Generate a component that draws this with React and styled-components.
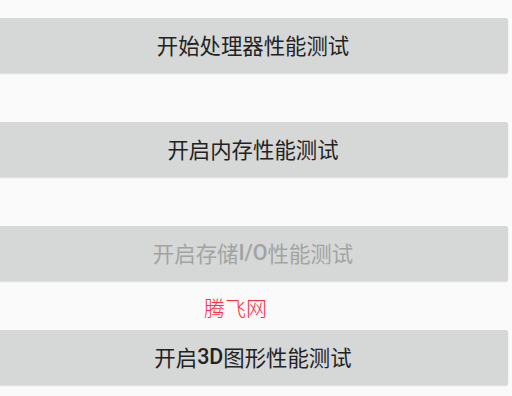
import React from "react";
import styled, { createGlobalStyle } from "styled-components";

const GlobalStyle = createGlobalStyle`
  html, body {
    margin: 0;
    padding: 0;
    background: #fafafa;
  }
  body {
    font-family: Roboto, "Noto Sans CJK SC", sans-serif;
  }
`;

const Screen = styled.div`
  width: 512px;
  height: 396px;
  overflow: hidden;
  background: #fafafa;
  padding-top: 18px;
  box-sizing: border-box;
`;

const Column = styled.div`
  display: flex;
  flex-direction: column;
  margin-left: -4px;
  width: 512px;
`;

const TestButton = styled.button`
  display: flex;
  align-items: center;
  justify-content: center;
  height: 55px;
  width: 100%;
  margin: 0;
  padding: 0 0 3px 2px;
  border: none;
  border-radius: 2px;
  background: #d6d7d7;
  box-shadow: 0 1px 1.5px rgba(0, 0, 0, 0.12);
  font-family: Roboto, "Noto Sans CJK SC", sans-serif;
  font-size: 21.4px;
  font-weight: 400;
  color: ${(p) => (p.disabled ? "#a2a3a3" : "#222222")};
  cursor: ${(p) => (p.disabled ? "default" : "pointer")};
`;

const Latin = styled.span`
  font-weight: 500;
`;

const Spacer = styled.div`
  height: 49px;
  flex-shrink: 0;
`;

const Note = styled.div`
  height: 49px;
  display: flex;
  align-items: center;
  padding-left: 208px;
  padding-top: 3px;
  box-sizing: border-box;
  font-family: "Noto Sans CJK SC", sans-serif;
  font-size: 21px;
  font-weight: 300;
  color: #ff2e3a;
`;

const App = () => {
  return (
    <>
      <GlobalStyle />
      <Screen>
        <Column>
          <TestButton>开始处理器性能测试</TestButton>
          <Spacer />
          <TestButton>开启内存性能测试</TestButton>
          <Spacer />
          <TestButton disabled>
            开启存储<Latin>I/O</Latin>性能测试
          </TestButton>
          <Note>腾飞网</Note>
          <TestButton>
            开启<Latin>3D</Latin>图形性能测试
          </TestButton>
        </Column>
      </Screen>
    </>
  );
};

export default App;
